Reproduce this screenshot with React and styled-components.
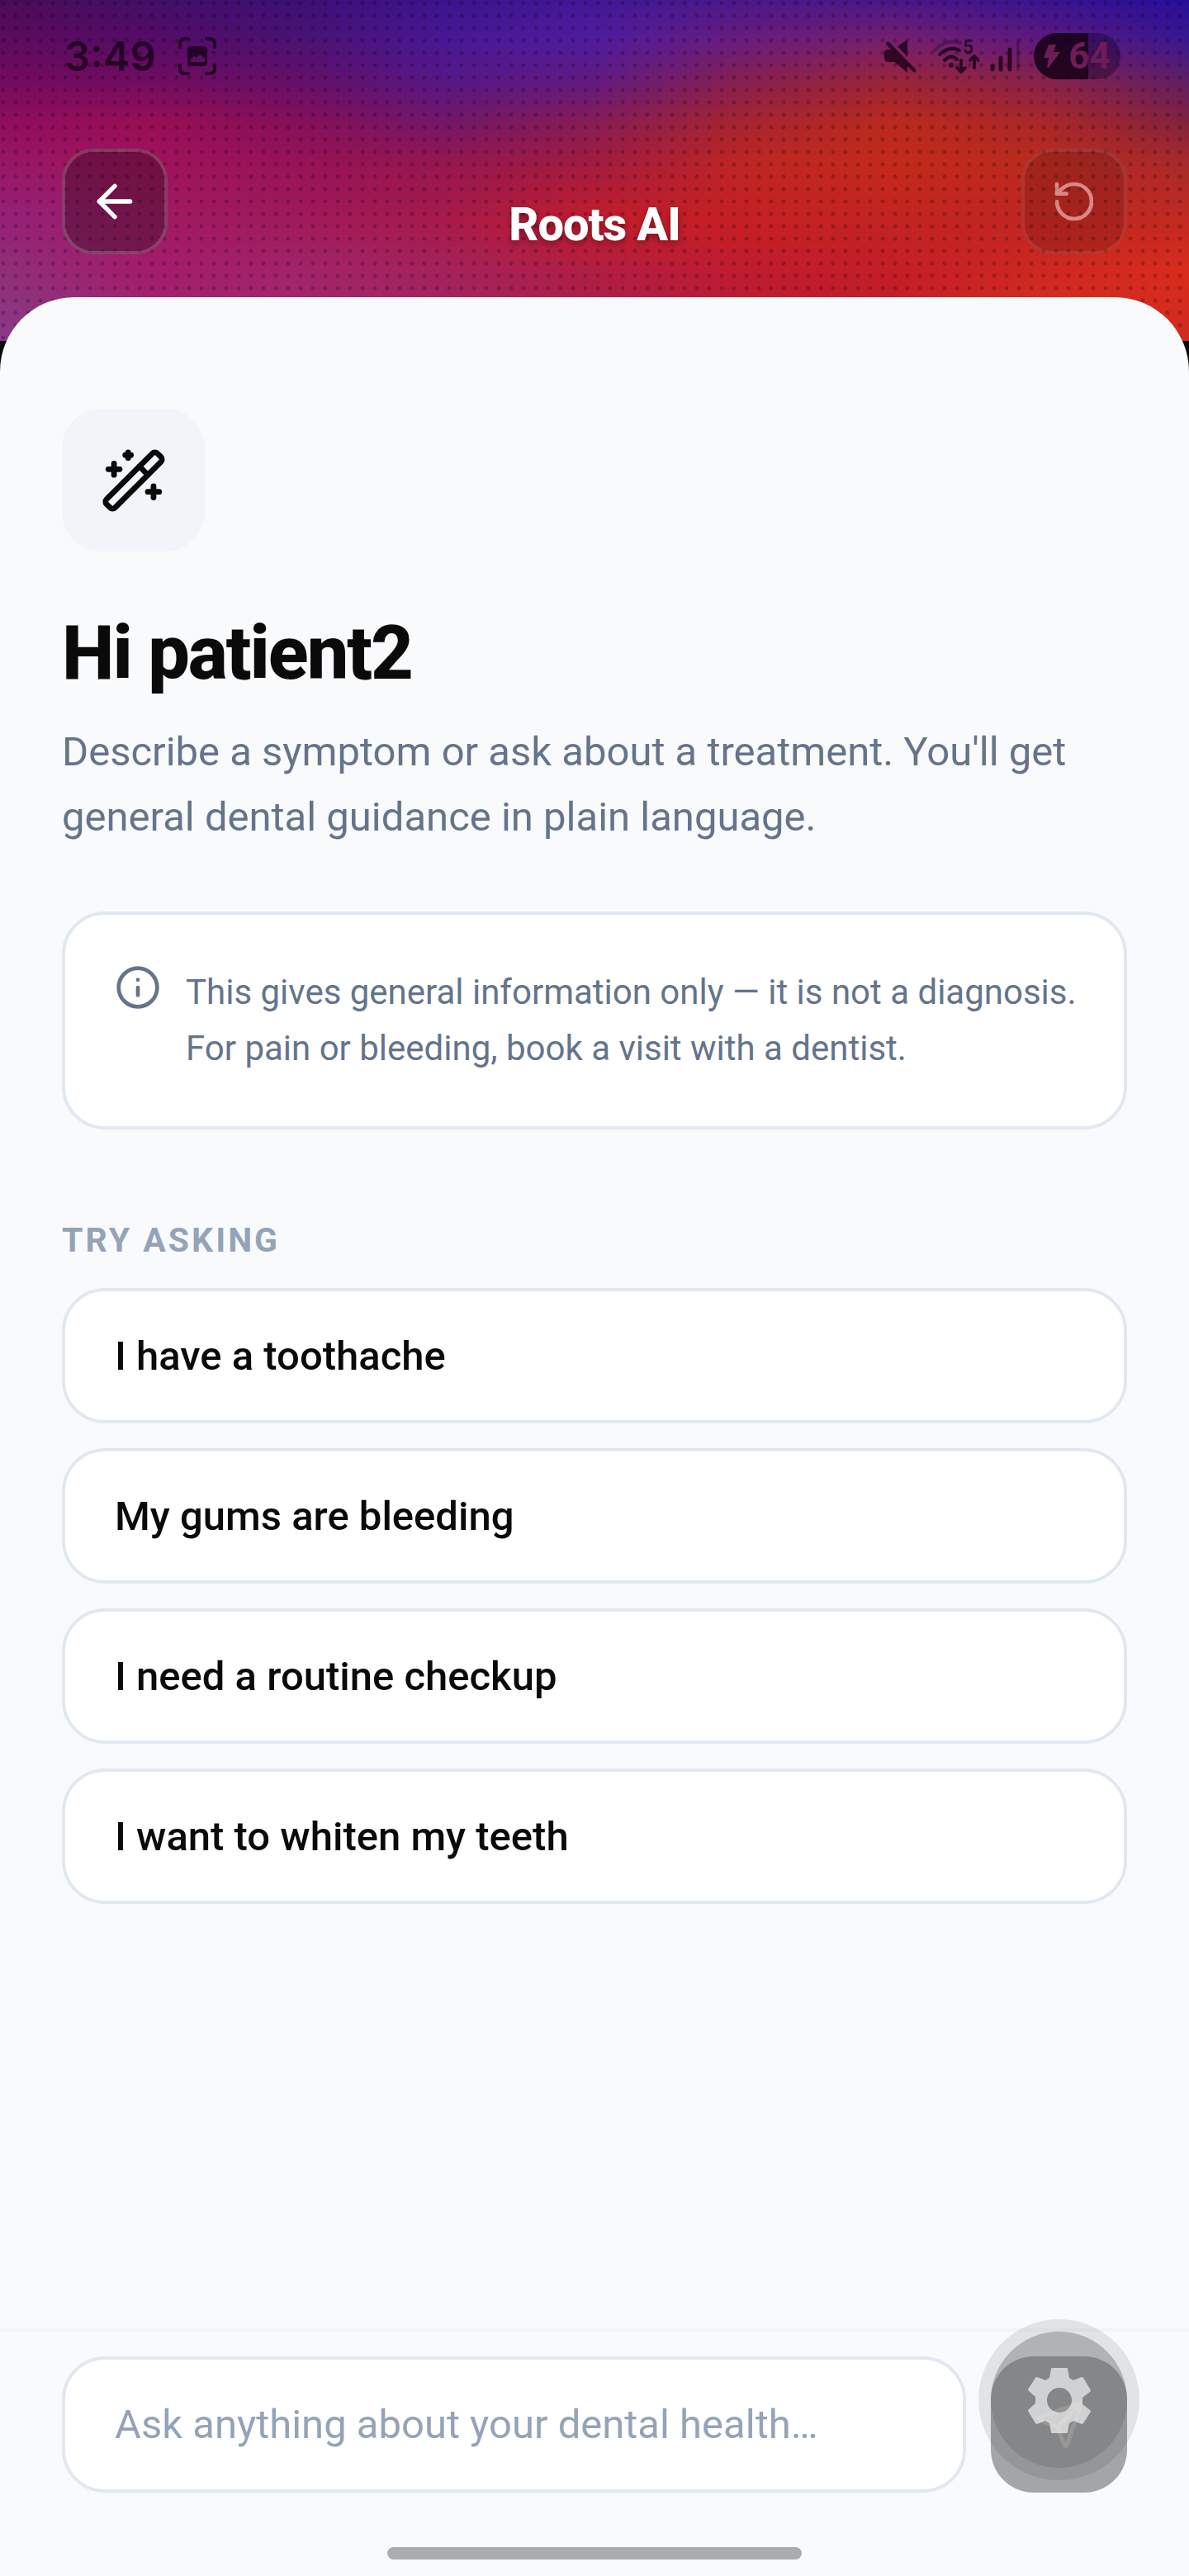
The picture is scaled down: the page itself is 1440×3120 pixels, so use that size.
import React, { useState } from "react";
import styled, { createGlobalStyle } from "styled-components";
import { ArrowLeft, RotateCcw, WandSparkles, Info, Send } from "lucide-react";

const suggestions = [
  "I have a toothache",
  "My gums are bleeding",
  "I need a routine checkup",
  "I want to whiten my teeth",
];

// colour rows of the header mesh, top to bottom, spread evenly from left to right
const meshRows = [
  { from: 0, to: 0, colors: ["#4a0c56", "#430f68", "#3d1076", "#3c148c", "#421896", "#4b188a", "#4a1788", "#3a148f", "#270e9a"] },
  { from: 0, to: 12, colors: ["#5e0b5e", "#560c66", "#4b1272", "#491894", "#501c9e", "#6a1d7c", "#76206c", "#5e1a7c", "#3a1890"] },
  { from: 12, to: 24, colors: ["#740c5e", "#720d60", "#651069", "#561884", "#621b80", "#88204f", "#9a2538", "#8a224a", "#602062"] },
  { from: 24, to: 36, colors: ["#900e5e", "#980f56", "#86105a", "#741768", "#881d54", "#a62530", "#ba2a1e", "#aa2828", "#84223e"] },
  { from: 36, to: 48, colors: ["#981866", "#a0135c", "#981358", "#96174f", "#a21c40", "#be2624", "#c42a1a", "#ba2a1e", "#a82a2c"] },
  { from: 48, to: 65, colors: ["#94227a", "#a01b64", "#a01b5c", "#a81b4a", "#c41e2c", "#c62024", "#c22422", "#c02622", "#c42a22"] },
  { from: 65, to: 80, colors: ["#903078", "#a41c6c", "#a2246a", "#a4235c", "#b01e44", "#c01c30", "#c41e28", "#ce2822", "#da2c1c"] },
  { from: 80, to: 100, colors: ["#883a88", "#9c2e76", "#a02a6e", "#a22860", "#a82250", "#b41c3a", "#c02028", "#e0301c", "#d02a20"] },
];

function Mesh() {
  return (
    <MeshBox>
      {meshRows.map((row) => (
        <MeshRow key={row.to} $row={row} />
      ))}
      <Dots />
    </MeshBox>
  );
}

function StatusBar() {
  return (
    <Status>
      <StatusGroup $gap={26}>
        <Clock>3:49</Clock>
        <svg width="48" height="48" viewBox="0 0 48 48" fill="none" stroke="currentColor" strokeWidth="4" strokeLinecap="round">
          <path d="M3 13V9q0-6 6-6h4M35 3h4q6 0 6 6v4M45 35v4q0 6-6 6h-4M13 45H9q-6 0-6-6v-4" />
          <path fill="currentColor" stroke="none" fillRule="evenodd" d="M16 12h16q4 0 4 4v16q0 4-4 4H16q-4 0-4-4V16q0-4 4-4zM16 28v3h17v-4l-6-5-4 4-3-2z" />
        </svg>
      </StatusGroup>
      <StatusGroup $gap={12}>
        <svg width="48" height="42" viewBox="0 0 48 42" fill="currentColor">
          <path d="M6 13h3L4 8a2 2 0 0 1 3-4l32 33a2 2 0 0 1-3 3l-7-7v8L13 28H6q-5 0-5-5v-5q0-5 5-5zM17 9L29 1v21z" />
        </svg>
        <svg width="56" height="62" viewBox="0 -10 56 62" fill="none" stroke="currentColor" strokeWidth="4" strokeLinecap="round">
          <path opacity="0.4" d="M2 14Q16-1 33 5" />
          <path d="M8 19Q19 8 32 14M14 26q8-8 15-1M34 26v13M29 35l5 5 5-5M50 35V22M45 26l5-5 5 5" />
          <circle cx="22" cy="32" r="3" fill="currentColor" stroke="none" />
          <text x="36" y="18" fontSize="23" fontWeight="600" fontFamily="Roboto" stroke="none" fill="currentColor">5</text>
        </svg>
        <svg width="42" height="42" viewBox="0 0 42 42" stroke="currentColor" strokeWidth="5" strokeLinecap="round">
          <path d="M4 33v4M14 23v14M25 13v24" />
          <path opacity="0.35" strokeWidth="4" d="M35 4v33" />
        </svg>
        <Battery>
          <svg width="20" height="28" viewBox="0 0 20 28" fill="currentColor">
            <path d="M6 0h9l-3 9h8L6 28H4l2-12H0z" />
          </svg>
          64
        </Battery>
      </StatusGroup>
    </Status>
  );
}

function App() {
  const [question, setQuestion] = useState("");

  return (
    <Screen>
      <GlobalStyle />
      <Header>
        <Mesh />
        <StatusBar />
        <NavBar>
          <NavButton aria-label="Back">
            <ArrowLeft size={64} />
          </NavButton>
          <Title>Roots AI</Title>
          <NavButton aria-label="Start over" disabled>
            <RotateCcw size={56} />
          </NavButton>
        </NavBar>
      </Header>
      <Sheet>
        <Content>
          <WandTile>
            <WandSparkles size={82} />
          </WandTile>
          <Greeting>Hi patient2</Greeting>
          <Intro>Describe a symptom or ask about a treatment. You'll get general dental guidance in plain language.</Intro>
          <Notice>
            <Info size={56} />
            <p>This gives general information only — it is not a diagnosis. For pain or bleeding, book a visit with a dentist.</p>
          </Notice>
          <Label>TRY ASKING</Label>
          <Suggestions>
            {suggestions.map((text) => (
              <Suggestion key={text} onClick={() => setQuestion(text)}>{text}</Suggestion>
            ))}
          </Suggestions>
        </Content>
        <Composer onSubmit={(e) => e.preventDefault()}>
          <Question
            aria-label="Your question"
            placeholder="Ask anything about your dental health…"
            value={question}
            onChange={(e) => setQuestion(e.target.value)}
          />
          <SendBox>
            <SendButton aria-label="Send">
              <Send size={62} />
            </SendButton>
            <FloatingButton type="button" aria-label="Settings">
              <span>
                <Gear />
              </span>
            </FloatingButton>
          </SendBox>
        </Composer>
        <HomeIndicator />
      </Sheet>
    </Screen>
  );
}

function Gear() {
  return (
    <svg width="78" height="80" viewBox="0 0 78 80" fill="currentColor">
      <path
        fillRule="evenodd"
        d="M30 1h18q1 0 1 1l2 11 5 3 10-4q1 0 2 1l9 15q0 1-1 2l-9 7v8l9 7q1 1 1 2l-9 14q-1 1-2 1l-10-4-5 3-2 11q0 1-1 1H30q-1 0-1-1l-2-11-5-3-10 4q-1 0-2-1L1 53q0-1 1-2l8-7v-8l-8-7q-1-1-1-2l9-14q1-1 2-1l10 4 5-3 2-11q0-1 1-1zM39 25a15 15 0 1 0 0 30a15 15 0 1 0 0-30z"
      />
    </svg>
  );
}

const GlobalStyle = createGlobalStyle`
  * {
    box-sizing: border-box;
  }
  body {
    margin: 0;
    background: #0a0a0a;
    font-family: Roboto, sans-serif;
  }
  button, input {
    font-family: inherit;
  }
  h1, h2, p {
    margin: 0;
  }
`
const Screen = styled.div`
  min-height: 100vh;
  display: flex;
  flex-direction: column;
`
const Header = styled.header`
  position: relative;
  padding-bottom: 105px;
`
const MeshBox = styled.div`
  position: absolute;
  inset: 0;
`
const MeshRow = styled.div`
  position: absolute;
  inset: 0;
  background: linear-gradient(to right, ${(p) => p.$row.colors.join(", ")});
  mask-image: linear-gradient(to bottom, ${(p) => (p.$row.to ? "transparent" : "black")} ${(p) => p.$row.from}%, black ${(p) => p.$row.to}%);
`
const Dots = styled.div`
  position: absolute;
  inset: 0;
  background: radial-gradient(circle at 4px 4px, rgba(0, 0, 0, 0.22) 2px, transparent 3px) 0 0 / 15px 15px;
`
const Status = styled.div`
  position: relative;
  height: 136px;
  padding: 0 83px 0 78px;
  display: flex;
  justify-content: space-between;
  align-items: center;
  color: rgba(20, 0, 20, 0.75);
`
const StatusGroup = styled.div`
  display: flex;
  align-items: center;
  gap: ${(p) => p.$gap}px;
`
const Clock = styled.span`
  font-family: Inter, sans-serif;
  font-size: 49px;
  font-weight: 600;
`
const Battery = styled.span`
  width: 105px;
  height: 56px;
  border-radius: 28px;
  display: flex;
  justify-content: center;
  align-items: center;
  gap: 10px;
  font-size: 44px;
  font-weight: 700;
  color: #6d1c58;
  background: linear-gradient(to right, rgba(20, 0, 20, 0.85) 63%, rgba(20, 0, 40, 0.4) 63%);
`
const NavBar = styled.nav`
  position: relative;
  margin-top: 44px;
  padding: 0 75px;
  display: flex;
  justify-content: space-between;
  align-items: flex-end;
`
const NavButton = styled.button`
  width: 128px;
  height: 128px;
  padding: 0;
  display: flex;
  justify-content: center;
  align-items: center;
  color: white;
  background: rgba(10, 10, 10, 0.3);
  border: 4px solid rgba(255, 255, 255, 0.18);
  border-radius: 38px;
  opacity: ${(p) => (p.disabled ? 0.45 : 1)};
`
const Title = styled.h1`
  font-size: 56px;
  line-height: 72px;
  font-weight: 800;
  letter-spacing: -1px;
  color: white;
  text-shadow: 0 4px 8px rgba(0, 0, 0, 0.35);
`
const Sheet = styled.main`
  position: relative;
  flex: 1;
  margin-top: -53px;
  display: flex;
  flex-direction: column;
  background: #f9fafc;
  border-radius: 90px 90px 0 0;
`
const Content = styled.div`
  flex: 1;
  padding: 135px 75px 60px;
`
const WandTile = styled.div`
  width: 173px;
  height: 173px;
  display: flex;
  justify-content: center;
  align-items: center;
  color: #0a0a0a;
  background: #f1f5f9;
  border-radius: 48px;
`
const Greeting = styled.h2`
  margin-top: 68px;
  font-size: 90px;
  line-height: 112px;
  font-weight: 800;
  letter-spacing: -2px;
  color: #0a0a0a;
`
const Intro = styled.p`
  margin-top: 23px;
  font-size: 49px;
  line-height: 79px;
  color: #64748b;
`
const Notice = styled.section`
  margin-top: 75px;
  padding: 60px 50px 60px 60px;
  display: flex;
  gap: 30px;
  color: #64748b;
  background: white;
  border: 4px solid #e2e8f0;
  border-radius: 52px;
  >svg{
    flex-shrink: 0;
  }
  >p{
    font-size: 42px;
    line-height: 68px;
  }
`
const Label = styled.h2`
  margin-top: 106px;
  font-size: 41px;
  line-height: 56px;
  font-weight: 700;
  letter-spacing: 3px;
  color: #94a3b8;
`
const Suggestions = styled.div`
  margin-top: 30px;
  display: flex;
  flex-direction: column;
  gap: 30px;
`
const Suggestion = styled.button`
  height: 164px;
  padding: 0 60px;
  text-align: left;
  font-size: 49px;
  font-weight: 500;
  color: #0a0a0a;
  background: white;
  border: 4px solid #e2e8f0;
  border-radius: 52px;
`
const Composer = styled.form`
  padding: 30px 75px 66px;
  display: flex;
  gap: 30px;
  border-top: 4px solid #f1f4fa;
`
const Question = styled.input`
  flex: 1;
  min-width: 0;
  height: 165px;
  padding: 0 60px;
  font-size: 49px;
  color: #0a0a0a;
  background: white;
  border: 4px solid #e2e8f0;
  border-radius: 52px;
  &::placeholder {
    color: #94a3b8;
    opacity: 1;
  }
`
const SendBox = styled.div`
  position: relative;
`
const SendButton = styled.button`
  width: 165px;
  height: 165px;
  padding: 0;
  display: flex;
  justify-content: center;
  align-items: center;
  color: #c2c4c0;
  background: #a4a5a7;
  border: none;
  border-radius: 52px;
`
const FloatingButton = styled.button`
  position: absolute;
  top: -45px;
  left: -15px;
  width: 195px;
  height: 195px;
  padding: 15px;
  background: rgba(0, 0, 0, 0.09);
  border: none;
  border-radius: 50%;
  >span{
    width: 165px;
    height: 165px;
    display: flex;
    justify-content: center;
    align-items: center;
    color: rgba(255, 255, 255, 0.62);
    background: rgba(113, 113, 116, 0.43);
    border-radius: 50%;
  }
`
const HomeIndicator = styled.div`
  width: 502px;
  height: 15px;
  margin: 0 auto 20px;
  background: #abacae;
  border-radius: 8px;
`
export default App;
